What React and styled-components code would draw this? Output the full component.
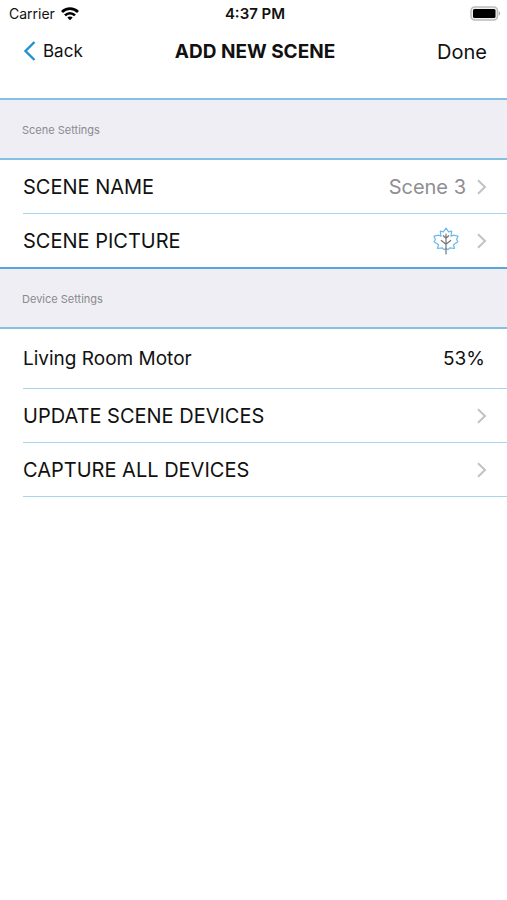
import React from "react";
import styled, { createGlobalStyle } from "styled-components";

const GlobalStyle = createGlobalStyle`
  *, *::before, *::after { box-sizing: border-box; }
  body {
    margin: 0;
    background: #fff;
    color: #111;
    font-family: Inter, "Liberation Sans", sans-serif;
  }
  button { font: inherit; color: inherit; background: none; border: 0; padding: 0; cursor: pointer; }
  svg { display: block; flex: none; }
`;

const Screen = styled.div`
  min-height: 100vh;
  background: #fff;
`;

const Bar = styled.div`
  display: grid;
  grid-template-columns: 1fr auto 1fr;
  align-items: center;
`;

const StatusBar = styled(Bar)`
  height: 27px;
  padding: 0 6px 0 9px;
  font-size: 14px;
  line-height: 16px;
`;

const Carrier = styled.div`
  display: flex;
  align-items: center;
  gap: 6px;
`;

const Clock = styled.time`
  font-size: 15px;
  font-weight: 600;
`;

const Battery = styled.div`
  justify-self: end;
`;

const NavBar = styled(Bar)`
  height: 71px;
  padding: 0 20px 22px 23px;
`;

const Title = styled.h1`
  margin: 0;
  font-size: 19px;
  line-height: 24px;
  font-weight: 700;
`;

const BackButton = styled.button`
  && {
    display: flex;
    align-items: center;
    justify-self: start;
    gap: 6px;
    padding-bottom: 2px;
    font-size: 17px;
    line-height: 20px;
  }
`;

const DoneButton = styled.button`
  && {
    justify-self: end;
    font-size: 20px;
    line-height: 24px;
  }
`;

const SectionTitle = styled.h2`
  display: flex;
  align-items: center;
  height: 62px;
  margin: 0;
  padding: 2px 22px 0;
  border: solid #83c0e2;
  border-width: 2px 0;
  border-top-color: ${(p) => (p.$joined ? "#5aa6d4" : "#83c0e2")};
  background: #efeef4;
  color: #8a8a8e;
  font-size: 11px;
  line-height: 14px;
  font-weight: 400;
`;

const Rows = styled.ul`
  margin: 0;
  padding: 0 0 0 23px;
  list-style: none;
`;

const Item = styled.li`
  height: ${(p) => (p.$tall ? "60px" : p.$flush ? "53px" : "54px")};
  border-bottom: ${(p) => (p.$flush ? "0" : "1px solid #a9d5ec")};
`;

const rowLayout = `
  display: flex;
  align-items: center;
  width: 100%;
  height: 100%;
  font-size: 20px;
  line-height: 24px;
  text-align: left;
`;

const RowButton = styled.button`
  && {
    ${rowLayout}
    padding-right: 20px;
  }
`;

const RowStatic = styled.div`
  ${rowLayout}
  padding-right: 22px;
  font-size: 19px;
`;

const Label = styled.span`
  flex: 1;
`;

const Value = styled.span`
  color: ${(p) => (p.$muted ? "#8e8e93" : "inherit")};
`;

const Trailing = styled.span`
  display: flex;
  align-items: center;
  gap: 11px;
`;

const PictureSlot = styled.span`
  margin-right: 7px;
`;

function WifiIcon() {
  return (
    <svg width="18" height="14" viewBox="0 0 18 14" aria-hidden="true" fill="none" stroke="#000" strokeWidth="2.7">
      <path d="M1 5C5.500.5 12.500.5 17 5" />
      <path d="M4 8.400c2.900-2.900 7.100-2.900 10 0" />
      <path d="M9 13.300 6.300 10.600c1.500-1.500 3.900-1.500 5.400 0Z" fill="#000" stroke="none" />
    </svg>
  );
}

function BatteryIcon() {
  return (
    <svg width="31" height="15" viewBox="0 0 31 15" role="img" aria-label="Battery full">
      <rect x="1" y="1" width="26.500" height="13" rx="3.800" fill="#f0f0f0" stroke="#bcbcbc" strokeWidth="1.500" />
      <rect x="3" y="3" width="22.500" height="9" rx="1.500" fill="#000" />
      <path d="M28.800 5.300v4.400c1.900-.8 1.900-3.600 0-4.400Z" fill="#aaa" />
    </svg>
  );
}

function BackIcon() {
  return (
    <svg width="14" height="20" viewBox="0 0 14 20" aria-hidden="true" fill="none" stroke="#2391d0" strokeWidth="2.400">
      <path d="M11.500 1 2.500 10l9 9" />
    </svg>
  );
}

function Chevron() {
  return (
    <svg width="10" height="16" viewBox="0 0 10 16" aria-hidden="true" fill="none" stroke="#c2c2c5" strokeWidth="2">
      <path d="m1 1.200 7 6.800-7 6.800" />
    </svg>
  );
}

function LeafIcon() {
  return (
    <svg width="26" height="28" viewBox="0 0 26 28" role="img" aria-label="Maple leaf" fill="none" strokeLinejoin="round" strokeLinecap="round">
      <path
        d="M13 1 10.400 4.800 7.300 4.200 8 9.300 5.800 8.200 1 9.200 2.400 12.300 1.200 14.700 5.500 17.800 4.500 21.500 9 20.800 11 22.600 13 21.600 15 22.600 17 20.800 21.500 21.500 20.500 17.800 24.800 14.700 23.600 12.300 25 9.200 20.200 8.200 18 9.300 18.700 4.200 15.600 4.800Z"
        stroke="#6db9e8"
        strokeWidth="1.200"
      />
      <path d="M13 7v20M10.300 8.700l2.700 2.500 2.700-2.500M8.300 13.500l4.700 3.700 4.700-3.700" stroke="#77757a" strokeWidth="1.200" />
    </svg>
  );
}

function LinkRow({ label, children }) {
  return (
    <RowButton type="button">
      <Label>{label}</Label>
      <Trailing>
        {children}
        <Chevron />
      </Trailing>
    </RowButton>
  );
}

export default function App() {
  return (
    <Screen>
      <GlobalStyle />
      <StatusBar>
        <Carrier>
          Carrier
          <WifiIcon />
        </Carrier>
        <Clock>4:37 PM</Clock>
        <Battery>
          <BatteryIcon />
        </Battery>
      </StatusBar>
      <NavBar as="header">
        <BackButton type="button">
          <BackIcon />
          Back
        </BackButton>
        <Title>ADD NEW SCENE</Title>
        <DoneButton type="button">Done</DoneButton>
      </NavBar>
      <main>
        <SectionTitle>Scene Settings</SectionTitle>
        <Rows>
          <Item>
            <LinkRow label="SCENE NAME">
              <Value $muted>Scene 3</Value>
            </LinkRow>
          </Item>
          <Item $flush>
            <LinkRow label="SCENE PICTURE">
              <PictureSlot>
                <LeafIcon />
              </PictureSlot>
            </LinkRow>
          </Item>
        </Rows>
        <SectionTitle $joined>Device Settings</SectionTitle>
        <Rows>
          <Item $tall>
            <RowStatic>
              <Label>Living Room Motor</Label>
              <Value>53%</Value>
            </RowStatic>
          </Item>
          <Item>
            <LinkRow label="UPDATE SCENE DEVICES" />
          </Item>
          <Item>
            <LinkRow label="CAPTURE ALL DEVICES" />
          </Item>
        </Rows>
      </main>
    </Screen>
  );
}
